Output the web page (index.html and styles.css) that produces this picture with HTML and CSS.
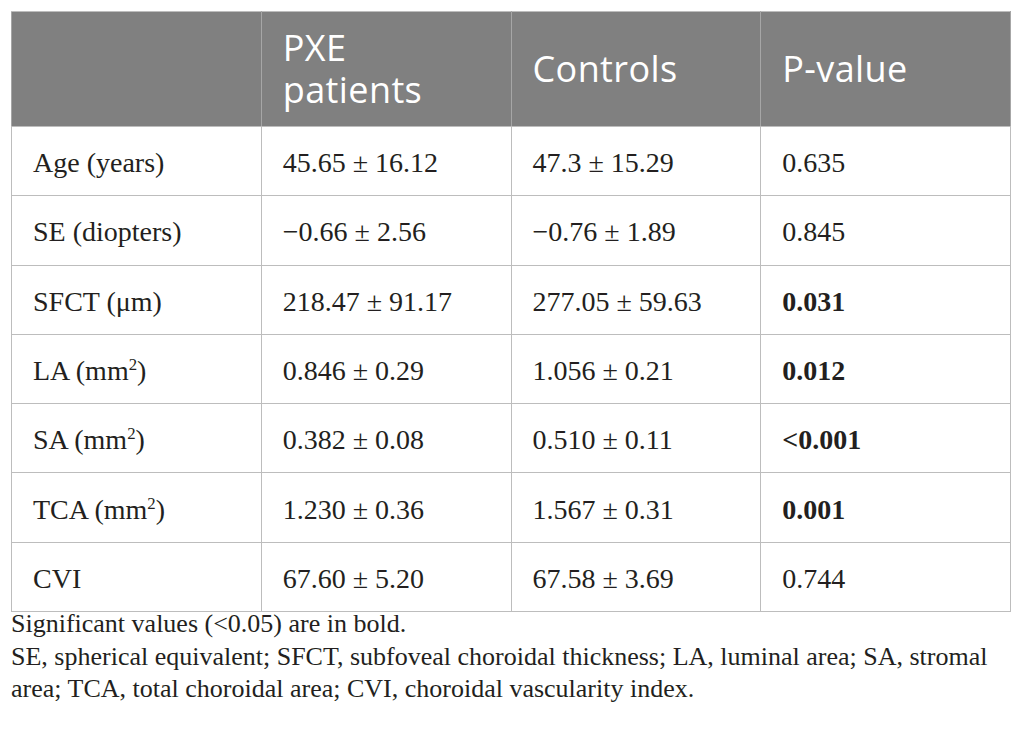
FILE: index.html
```html
<!DOCTYPE html>
<html lang="en">
<head>
<meta charset="utf-8">
<title>Table</title>
<link rel="stylesheet" href="styles.css">
</head>
<body>
<div class="wrap">
<table class="data">
  <thead>
    <tr>
      <th></th>
      <th>PXE patients</th>
      <th>Controls</th>
      <th>P-value</th>
    </tr>
  </thead>
  <tbody>
    <tr><td>Age (years)</td><td>45.65 ± 16.12</td><td>47.3 ± 15.29</td><td>0.635</td></tr>
    <tr><td>SE (diopters)</td><td>−0.66 ± 2.56</td><td>−0.76 ± 1.89</td><td>0.845</td></tr>
    <tr><td>SFCT (μm)</td><td>218.47 ± 91.17</td><td>277.05 ± 59.63</td><td class="sig">0.031</td></tr>
    <tr><td>LA (mm<sup>2</sup>)</td><td>0.846 ± 0.29</td><td>1.056 ± 0.21</td><td class="sig">0.012</td></tr>
    <tr><td>SA (mm<sup>2</sup>)</td><td>0.382 ± 0.08</td><td>0.510 ± 0.11</td><td class="sig">&lt;0.001</td></tr>
    <tr><td>TCA (mm<sup>2</sup>)</td><td>1.230 ± 0.36</td><td>1.567 ± 0.31</td><td class="sig">0.001</td></tr>
    <tr><td>CVI</td><td>67.60 ± 5.20</td><td>67.58 ± 3.69</td><td>0.744</td></tr>
  </tbody>
</table>
<div class="notes">
  <p>Significant values (&lt;0.05) are in bold.</p>
  <p>SE, spherical equivalent; SFCT, subfoveal choroidal thickness; LA, luminal area; SA, stromal area; TCA, total choroidal area; CVI, choroidal vascularity index.</p>
</div>
</div>
</body>
</html>
```

FILE: styles.css
```css
html, body {
  margin: 0;
  padding: 0;
  background: #ffffff;
}

.wrap {
  padding: 11px 0 0 11px;
  width: 1000px;
}

.data {
  width: 1000px;
  border-collapse: collapse;
  table-layout: fixed;
  color: #231f20;
  font-family: "Liberation Serif", "Times New Roman", serif;
  font-size: 28px;
}

.data th,
.data td {
  border: 1px solid #bdbdbd;
  padding: 0 20px 0 21px;
  text-align: left;
  vertical-align: middle;
}

.data thead tr {
  height: 115px;
}

.data th {
  background: #808080;
  color: #ffffff;
  font-family: "Open Sans", "Noto Sans", sans-serif;
  font-weight: 400;
  font-size: 36px;
  letter-spacing: 0.4px;
  line-height: 42px;
  padding-right: 30px;
  border-color: #a6a6a6;
  border-top-color: #bdbdbd;
  border-bottom-color: #bdbdbd;
}

.data tbody tr {
  height: 69.3px;
}

.data td {
  line-height: 31px;
  padding-top: 3px;
}

.data sup {
  font-size: 60%;
  line-height: 0;
  vertical-align: 0.62em;
}

.data .sig {
  font-weight: 700;
}

.notes {
  margin-top: -4px;
  color: #231f20;
  font-family: "Liberation Serif", "Times New Roman", serif;
  font-size: 26px;
  line-height: 32.5px;
}

.notes p {
  margin: 0;
}
```
